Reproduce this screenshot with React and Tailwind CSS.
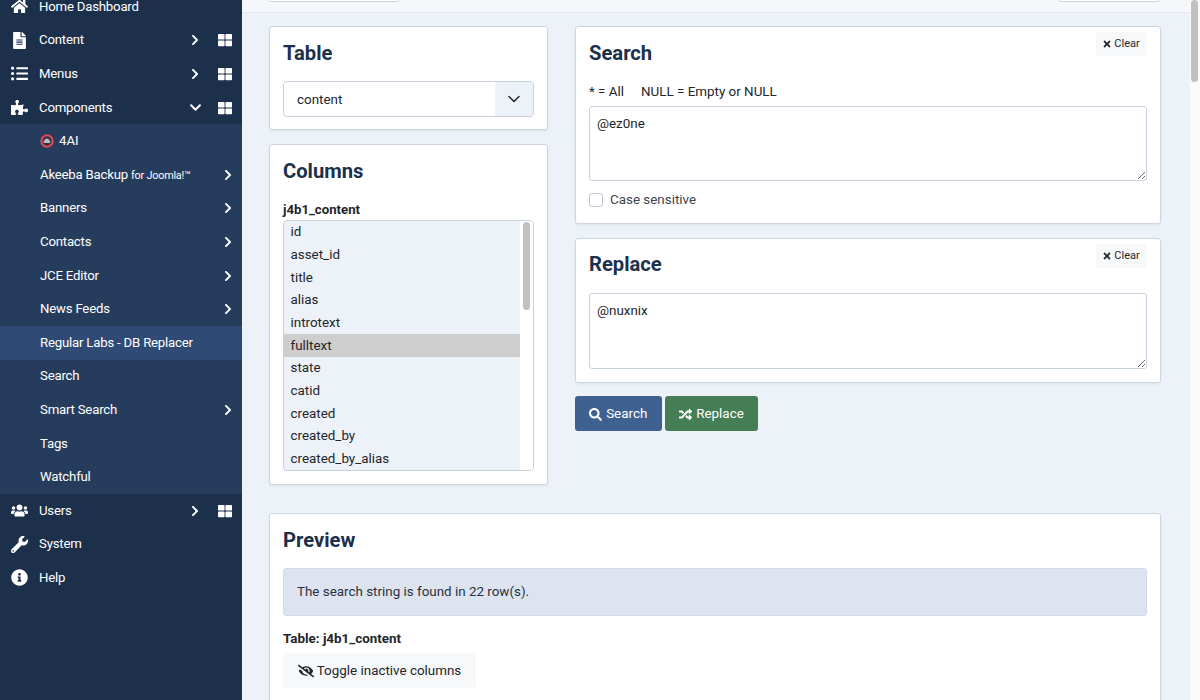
import React from "react";
import { ChevronDown } from "lucide-react";
import {
  FaHome,
  FaFileAlt,
  FaListUl,
  FaPuzzlePiece,
  FaUsers,
  FaWrench,
  FaInfoCircle,
  FaThLarge,
  FaChevronRight,
  FaChevronDown,
  FaTimes,
  FaSearch,
  FaRandom,
  FaEyeSlash,
} from "react-icons/fa";

const topItems = [
  { label: "Content", icon: FaFileAlt, more: true },
  { label: "Menus", icon: FaListUl, more: true },
];

const subItems = [
  { label: "Akeeba Backup", note: "for Joomla!™", more: true },
  { label: "Banners", more: true },
  { label: "Contacts", more: true },
  { label: "JCE Editor", more: true },
  { label: "News Feeds", more: true },
  { label: "Regular Labs - DB Replacer", active: true },
  { label: "Search" },
  { label: "Smart Search", more: true },
  { label: "Tags" },
  { label: "Watchful" },
];

const columns = [
  "id",
  "asset_id",
  "title",
  "alias",
  "introtext",
  "fulltext",
  "state",
  "catid",
  "created",
  "created_by",
  "created_by_alias",
];

function TopRow({ label, icon: Icon, open, more, dash }) {
  return (
    <div className="flex h-[33.6px] items-center text-[13.2px] tracking-[-0.2px] text-white">
      <div className="flex w-[39px] shrink-0 justify-center">
        <Icon className="text-[17px]" />
      </div>
      <span className="flex-1">{label}</span>
      {more && (
        <span className="flex w-[14px] justify-center">
          {open ? <FaChevronDown className="text-[13px]" /> : <FaChevronRight className="text-[12px]" />}
        </span>
      )}
      {dash && <FaThLarge className="ml-[16px] mr-[10px] text-[14px]" />}
    </div>
  );
}

function SubRow({ label, note, more, active }) {
  return (
    <div
      className={`flex h-[33.6px] items-center pl-[40px] pr-[8px] text-[13.2px] tracking-[-0.2px] text-white ${
        active ? "bg-[#2f4a74]" : ""
      }`}
    >
      <span className="flex-1">
        {label}
        {note && <span className="ml-[3px] text-[10.8px]">{note}</span>}
      </span>
      {more && <FaChevronRight className="text-[12px]" />}
    </div>
  );
}

function Clear() {
  return (
    <button className="absolute right-[14px] top-[5px] flex h-[24px] w-[50px] items-center justify-center gap-[2px] rounded-[3px] bg-[#f7f8fa] text-[11px] text-[#22262a]">
      <FaTimes className="text-[10px]" />
      Clear
    </button>
  );
}

function Card({ className, children }) {
  return (
    <div
      className={`relative rounded-[3px] border border-[#cdd6e2] bg-white px-[13px] shadow-[0_1px_2px_rgba(30,50,80,0.08)] ${className}`}
    >
      {children}
    </div>
  );
}

export default function App() {
  return (
    <div
      className="flex h-[700px] w-[1200px] overflow-hidden bg-white text-[#22262a]"
      style={{ fontFamily: "Roboto, 'Liberation Sans', sans-serif" }}
    >
      {/* Sidebar */}
      <aside className="w-[242px] shrink-0 bg-[#1c2f4b]">
        <div className="-mt-[10px]">
          <TopRow label="Home Dashboard" icon={FaHome} />
          {topItems.map((item) => (
            <TopRow key={item.label} label={item.label} icon={item.icon} more={item.more} dash />
          ))}
          <TopRow label="Components" icon={FaPuzzlePiece} open more dash />
          <div className="bg-[#263c5d]">
            <div className="flex h-[33.6px] items-center pl-[40px] text-[13.2px] text-white">
              <svg viewBox="0 0 16 16" className="mr-[5px] h-[14px] w-[14px]">
                <circle cx="8" cy="8" r="6.5" fill="#2f3542" stroke="#e0485a" strokeWidth="2.4" />
                <path d="M4.8 10.2a1.6 1.6 0 0 1 .4-3 2.8 2.8 0 0 1 5.4.3 1.4 1.4 0 0 1 .2 2.7z" fill="#b9bcc4" />
              </svg>
              4AI
            </div>
            {subItems.map((item) => (
              <SubRow key={item.label} {...item} />
            ))}
          </div>
          <TopRow label="Users" icon={FaUsers} more dash />
          <TopRow label="System" icon={FaWrench} />
          <TopRow label="Help" icon={FaInfoCircle} />
        </div>
      </aside>

      {/* Main */}
      <main className="flex-1 bg-[#edf1f8] text-[13.4px]">
        <div className="flex h-[13px] justify-between border-b border-[#e3e8ef] bg-[#f5f7fa] pl-[27px] pr-[30px]">
          <div className="h-[2px] w-[130px] rounded-b-[3px] border border-t-0 border-[#cdd3dc] bg-white" />
          <div className="h-[2px] w-[101px] rounded-b-[3px] border border-t-0 border-[#cdd3dc] bg-white" />
        </div>

        <div className="pl-[27px] pr-[29px] pt-[13px]">
          <div className="flex gap-[27px]">
            {/* Left column */}
            <div className="flex w-[279px] shrink-0 flex-col gap-[14px]">
              <Card className="h-[104px]">
                <h2 className="mt-[9.5px] text-[20.2px] font-bold leading-[32px] text-[#1c2f4b]">Table</h2>
                <div className="mt-[12.5px] flex h-[36px] items-center overflow-hidden rounded-[4px] border border-[#c9d3df]">
                  <span className="flex-1 pl-[13px] pt-[2px]">content</span>
                  <span className="flex h-full w-[38px] items-center justify-center bg-[#edf1f8]">
                    <ChevronDown size={20} strokeWidth={1.8} className="text-[#22262a]" />
                  </span>
                </div>
              </Card>
              <Card className="h-[341px]">
                <h2 className="mt-[9.5px] text-[20.2px] font-bold leading-[32px] text-[#1c2f4b]">Columns</h2>
                <div className="mt-[14.5px] text-[13.2px] font-bold leading-[18px] text-[#22262a]">j4b1_content</div>
                <div className="mt-[1px] flex h-[251px] overflow-hidden rounded-[4px] border border-[#c9d3df] bg-[#edf1f8]">
                  <ul className="flex-1">
                    {columns.map((col) => (
                      <li
                        key={col}
                        className={`flex h-[22.7px] items-center pl-[6.5px] ${
                          col === "fulltext" ? "bg-[#cecece]" : ""
                        }`}
                      >
                        {col}
                      </li>
                    ))}
                  </ul>
                  <div className="w-[13px] shrink-0 bg-white pl-[3px] pt-[1px]">
                    <div className="h-[88px] w-[7px] rounded-full bg-[#c1c1c1]" />
                  </div>
                </div>
              </Card>
            </div>

            {/* Right column */}
            <div className="min-w-0 flex-1">
              <Card className="h-[198px]">
                <Clear />
                <h2 className="mt-[9.5px] text-[20.2px] font-bold leading-[32px] text-[#1c2f4b]">Search</h2>
                <div className="mt-[13.5px] flex gap-[17px] leading-[20px]">
                  <span>* = All</span>
                  <span>NULL = Empty or NULL</span>
                </div>
                <textarea
                  readOnly
                  value="@ez0ne"
                  className="mt-[4px] block h-[75px] w-full rounded-[3px] border border-[#c9d3df] bg-white px-[7px] pb-[6px] pt-[7px] outline-none"
                />
                <label className="mt-[11px] flex items-center gap-[7px] leading-[16px] text-[#3c4550]">
                  <span className="h-[14px] w-[14px] rounded-[3px] border border-[#c4ccd6] bg-white" />
                  Case sensitive
                </label>
              </Card>
              <Card className="mt-[14px] h-[145px]">
                <Clear />
                <h2 className="mt-[9px] text-[20.2px] font-bold leading-[32px] text-[#1c2f4b]">Replace</h2>
                <textarea
                  readOnly
                  value="@nuxnix"
                  className="mt-[13px] block h-[76px] w-full rounded-[3px] border border-[#c9d3df] bg-white px-[7px] pb-[6px] pt-[7px] outline-none"
                />
              </Card>
              <div className="mt-[13px] flex gap-[3.5px]">
                <button className="flex h-[35px] w-[86.5px] items-center justify-center gap-[4px] rounded-[3px] bg-[#3e6191] pt-[1px] text-white">
                  <FaSearch className="text-[13px]" />
                  Search
                </button>
                <button className="flex h-[35px] w-[93px] items-center justify-center gap-[4px] rounded-[3px] bg-[#457d54] pt-[1px] text-white">
                  <FaRandom className="text-[13px]" />
                  Replace
                </button>
              </div>
            </div>
          </div>

          {/* Preview */}
          <Card className="mt-[28px] h-[260px]">
            <h2 className="mt-[9.5px] text-[20.2px] font-bold leading-[32px] text-[#1c2f4b]">Preview</h2>
            <div className="mt-[12.5px] flex h-[48px] items-center rounded-[3px] border border-[#d3dbe8] bg-[#dde4f0] px-[13px] pt-[1px] text-[#28323f]">
              The search string is found in 22 row(s).
            </div>
            <div className="mt-[14px] text-[13.4px] font-bold leading-[18px] text-[#22262a]">Table: j4b1_content</div>
            <button className="mt-[5px] flex h-[35px] w-[193px] items-center justify-center gap-[3px] rounded-[3px] bg-[#f7f8fa] pt-[1px] text-[#22262a]">
              <FaEyeSlash className="text-[16px]" />
              Toggle inactive columns
            </button>
          </Card>
        </div>
      </main>

      {/* Scrollbar */}
      <div className="w-[10px] shrink-0 bg-[#fafafa] pl-[1px]">
        <div className="h-[82px] w-[7px] rounded-full bg-[#c1c1c1]" />
      </div>
    </div>
  );
}
